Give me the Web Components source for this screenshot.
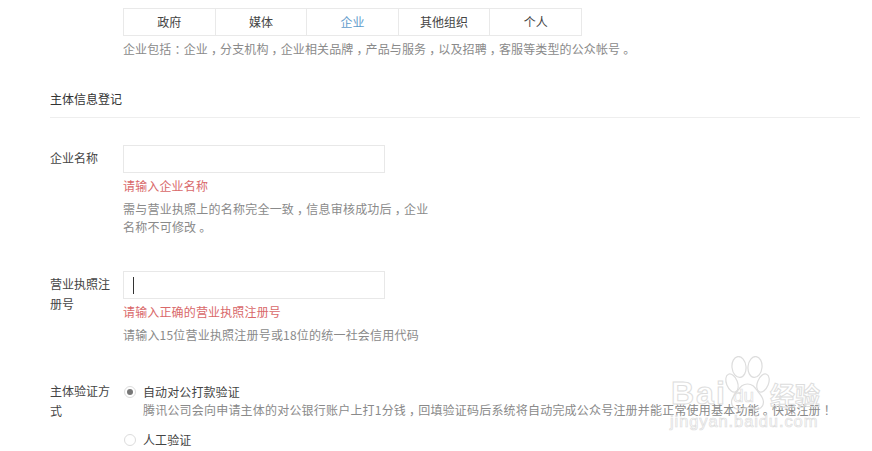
<!DOCTYPE html>
<html lang="zh-CN"><head><meta charset="utf-8"><title>主体信息登记</title>
<style>
html,body{margin:0;padding:0;background:#fff;overflow:hidden;height:451px}
body{font:12px/18px "Noto Sans CJK SC","Liberation Sans",sans-serif;color:#444;position:relative}
main{display:block;padding:8px 12px 0 50px}
</style></head><body>
<main>
<type-tabs active="2">
  <span>政府</span><span>媒体</span><span>企业</span><span>其他组织</span><span>个人</span>
</type-tabs>
<type-note>企业包括：企业，分支机构，企业相关品牌，产品与服务，以及招聘，客服等类型的公众帐号。</type-note>
<section-title>主体信息登记</section-title>
<form-field label="企业名称" style="--top:27px">
  <text-box></text-box>
  <field-error>请输入企业名称</field-error>
  <field-hint style="letter-spacing:.22px">需与营业执照上的名称完全一致，信息审核成功后，企业|名称不可修改。</field-hint>
</form-field>
<form-field label="营业执照注册号" style="--top:35px">
  <text-box caret></text-box>
  <field-error>请输入正确的营业执照注册号</field-error>
  <field-hint>请输入15位营业执照注册号或18位的统一社会信用代码</field-hint>
</form-field>
<form-field label="主体验证方式" radio style="--top:39px">
  <radio-option checked title-text="自动对公打款验证">腾讯公司会向申请主体的对公银行账户上打1分钱，回填验证码后系统将自动完成公众号注册并能正常使用基本功能。快速注册！</radio-option>
  <radio-option title-text="人工验证"></radio-option>
</form-field>
</main>
<baidu-mark></baidu-mark>
<script>
function centerPunct(el){
  el.innerHTML=el.textContent.replace(/[，：。！]/g,m=>'<span style="margin-left:3px;letter-spacing:-2.850px">'+m+'</span>').replace('|','<br>');
}
function def(name, css, html, init){
  customElements.define(name, class extends HTMLElement{
    constructor(){super();const r=this.attachShadow({mode:'open'});r.innerHTML='<style>'+css+'</style>'+html;}
    connectedCallback(){if(init)init(this,this.shadowRoot);}
  });
}
def('type-tabs',`:host{display:flex;width:459px;height:28px;margin-left:73px;box-sizing:border-box;border:1px solid #e9e9e9}
::slotted(span){flex:1;display:flex;align-items:center;justify-content:center;border-left:1px solid #e9e9e9;color:#444;line-height:26px}
::slotted(span:first-child){border-left:0}
::slotted(.on){color:#5f9ccb}`,'<slot></slot>',(el)=>{el.children[+el.getAttribute('active')].className='on';});
def('type-note',`:host{display:block;margin:4px 0 0 73px;color:#8a8a8a;line-height:18px;letter-spacing:.12px}`,'<slot></slot>',centerPunct);
def('section-title',`:host{display:block;margin-top:32px;padding-bottom:9px;border-bottom:1px solid #eeeeee;color:#333;line-height:18px;font-size:12px}`,'<slot></slot>');
def('form-field',`:host{display:grid;grid-template-columns:62px 1fr;column-gap:11px;margin-top:var(--top)}
.l{line-height:20px;padding-top:3px;color:#444}
:host([radio]) .l{padding-top:0;margin-top:-2px;line-height:19.500px}
.c{min-width:0}`,'<div class="l"></div><div class="c"><slot></slot></div>',(el,r)=>{r.querySelector('.l').textContent=el.getAttribute('label');});
def('text-box',`:host{display:flex;align-items:center;width:262px;height:28px;box-sizing:border-box;border:1px solid #e8e8e8;background:#fff;padding-left:9px}
i{display:none;width:1px;height:17px;background:#333}
:host([caret]) i{display:block}`,'<i></i>');
def('field-error',`:host{display:block;margin-top:4px;color:#d9686a;line-height:18px;letter-spacing:.15px}`,'<slot></slot>');
def('field-hint',`:host{display:block;margin-top:5px;color:#8a8a8a;line-height:18px;letter-spacing:.2px}`,'<slot></slot>',centerPunct);
def('radio-option',`:host{display:grid;grid-template-columns:12px 1fr;column-gap:7px;margin-bottom:12px;margin-left:1px}
.r{width:12px;height:12px;box-sizing:border-box;border:1px solid #dcdcdc;border-radius:50%;margin-top:3px;display:flex;align-items:center;justify-content:center;background:#fff}
:host([checked]) .r::after{content:"";width:6px;height:6px;border-radius:50%;background:#777}
.t{color:#444;letter-spacing:.1px}.d{grid-column:2;color:#8a8a8a;white-space:nowrap;letter-spacing:.2px}.d:empty{display:none}`,
'<div class="r"></div><div class="t"></div><div class="d"><slot></slot></div>',(el,r)=>{r.querySelector('.t').textContent=el.getAttribute('title-text');if(el.textContent.trim())centerPunct(el);else r.querySelector('.d').style.display='none';});
def('baidu-mark',`:host{position:absolute;left:668px;top:356px;width:160px;height:80px;pointer-events:none;font-family:"Liberation Sans",sans-serif}
span{position:absolute;color:transparent;-webkit-text-stroke:1px #dddddd;white-space:nowrap}
.b{left:3px;top:19px;font-size:32px;line-height:36px;font-weight:700;letter-spacing:2px}
.j{left:2px;top:55px;font-size:16.5px;line-height:20px;letter-spacing:.9px;-webkit-text-stroke:.7px #dddddd}
.c{left:102px;top:24px;font:700 25px/28px "Noto Sans CJK SC",sans-serif}
.d{left:65px;top:29px;font-size:19px;line-height:22px;-webkit-text-stroke:.7px #dddddd}
svg{position:absolute;left:54px;top:0}`,
`<span class="b">Bai</span><svg width="52" height="56" viewBox="0 0 52 56" fill="none" stroke="#dddddd" stroke-width="1.200">
<ellipse cx="10" cy="27" rx="5.500" ry="9.500" transform="rotate(-22 10 27)"/>
<ellipse cx="17" cy="11" rx="7" ry="10.500" transform="rotate(-6 17 11)"/>
<ellipse cx="33" cy="11" rx="7" ry="10.500" transform="rotate(6 33 11)"/>
<ellipse cx="41" cy="27" rx="5.500" ry="9.500" transform="rotate(22 41 27)"/>
<path d="M25.500 28c-5 0-7 3-10 7-3 3.500-6 7-6 11 0 5 4 8 9 7 3-.5 5-1.500 7-1.500s4 1 7 1.500c5 1 9-2 9-7 0-4-3-7.500-6-11-3-4-5-7-10-7z"/></svg>
<span class="d">du</span>
<span class="c">经验</span><span class="j">jingyan.baidu.com</span>`);
</script>
</body></html>
